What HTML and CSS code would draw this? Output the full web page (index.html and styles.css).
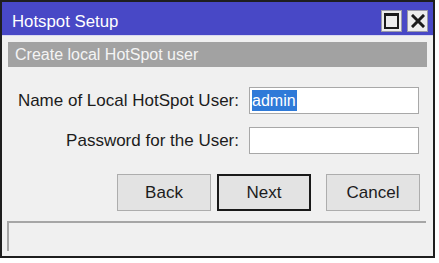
FILE: index.html
```html
<!DOCTYPE html>
<html lang="en">
<head>
  <meta charset="UTF-8">
  <title>Hotspot Setup</title>
  <link rel="stylesheet" href="styles.css">
</head>
<body>
  <div class="window">
    <div class="title-bar">
      <span class="title">Hotspot Setup</span>
      <div class="title-buttons">
        <span class="tb-btn"><span class="max-icon"></span></span>
        <span class="tb-btn">
          <svg width="14" height="14" viewBox="0 0 14 14">
            <path d="M2 2 L12 12 M12 2 L2 12" stroke="#1a1a1a" stroke-width="3" stroke-linecap="square"/>
          </svg>
        </span>
      </div>
    </div>

    <div class="section">Create local HotSpot user</div>

    <form class="fields">
      <label for="user">Name of Local HotSpot User:</label>
      <div class="input"><span class="selected">admin</span></div>

      <label for="pass">Password for the User:</label>
      <div class="input"></div>
    </form>

    <div class="actions">
      <button class="btn">Back</button>
      <button class="btn focused">Next</button>
      <button class="btn cancel">Cancel</button>
    </div>

    <div class="status"></div>
  </div>
</body>
</html>
```

FILE: styles.css
```css
body {
  margin: 0;
  background: #fff;
  font-family: "Liberation Sans", Arial, sans-serif;
}

.window {
  width: 435px;
  height: 258px;
  box-sizing: border-box;
  border: 2px solid #1e1e1e;
  background: #f0f0f0;
  display: flex;
  flex-direction: column;
}

.title-bar {
  height: 34px;
  background: #4848c6;
  border-bottom: 1px solid #d8d8f0;
  box-sizing: border-box;
  display: flex;
  align-items: center;
  justify-content: space-between;
  padding: 4px 5px 0 10px;
}

.title {
  color: #fff;
  font-size: 16.8px;
  margin-top: 2px;
}

.title-buttons {
  display: flex;
  gap: 5px;
}

.tb-btn {
  width: 21px;
  height: 22px;
  box-sizing: border-box;
  background: #ececec;
  border: 1px solid #9a9aa8;
  display: flex;
  align-items: center;
  justify-content: center;
}

.max-icon {
  width: 11px;
  height: 11px;
  border: 2px solid #1a1a1a;
  border-top-width: 3px;
}

.section {
  margin: 6px 6px 0 6px;
  height: 25px;
  background: #a2a2a2;
  color: #f4f4f4;
  font-size: 16px;
  line-height: 26px;
  padding-left: 7px;
}

.fields {
  margin: 20px 0 0 0;
  padding-right: 14px;
  display: grid;
  grid-template-columns: 1fr 170px;
  grid-auto-rows: 27px;
  column-gap: 10px;
  row-gap: 13px;
  align-items: center;
}

.fields label {
  text-align: right;
  font-size: 17px;
  color: #1c1c1c;
}

.input {
  height: 27px;
  box-sizing: border-box;
  background: #fff;
  border: 1px solid #a8a8a8;
  padding: 2px 2px;
  font-size: 16px;
  line-height: 21px;
}

.selected {
  display: inline-block;
  background: #2f7ad8;
  color: #fff;
  padding-right: 1px;
}

.actions {
  margin-top: 20px;
  padding-right: 13px;
  display: flex;
  justify-content: flex-end;
  gap: 6px;
}

.btn {
  width: 94px;
  height: 37px;
  background: #e3e3e3;
  border: 1px solid #adadad;
  font-family: "Liberation Sans", Arial, sans-serif;
  font-size: 17px;
  color: #1c1c1c;
  padding: 0;
}

.btn.focused {
  border: 2px solid #1a1a1a;
}

.btn.cancel {
  margin-left: 9px;
}

.status {
  margin: 10px 7px 0 5px;
  height: 30px;
  box-sizing: border-box;
  border-top: 2px solid #a6a6a6;
  border-left: 2px solid #a6a6a6;
}
```
